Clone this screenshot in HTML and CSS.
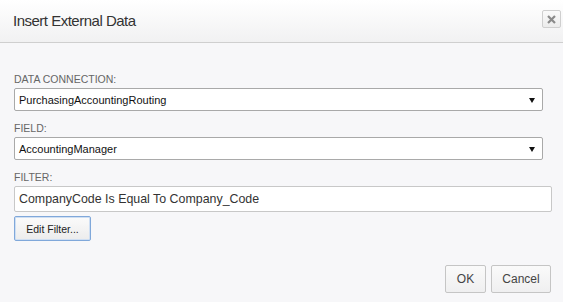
FILE: index.html
```html
<!DOCTYPE html>
<html>
<head>
<meta charset="utf-8">
<link rel="stylesheet" href="styles.css">
</head>
<body>
<div class="dialog">
  <div class="header">
    <div class="title">Insert External Data</div>
    <button class="close" aria-label="Close">
      <svg width="9" height="9" viewBox="0 0 9 9"><path d="M1 1L8 8M8 1L1 8" stroke="#8a8a8a" stroke-width="2.2"/></svg>
    </button>
  </div>
  <div class="body">
    <div class="field">
      <div class="label">DATA CONNECTION:</div>
      <div class="select"><span>PurchasingAccountingRouting</span><span class="arrow"></span></div>
    </div>
    <div class="field">
      <div class="label">FIELD:</div>
      <div class="select"><span>AccountingManager</span><span class="arrow"></span></div>
    </div>
    <div class="field filter">
      <div class="label">FILTER:</div>
      <div class="input">CompanyCode Is Equal To Company_Code</div>
      <button class="btn edit">Edit Filter...</button>
    </div>
    <div class="footer">
      <button class="btn ok">OK</button>
      <button class="btn cancel">Cancel</button>
    </div>
  </div>
</div>
</body>
</html>
```
FILE: styles.css
```css
html, body { margin: 0; padding: 0; }
body {
  width: 563px;
  height: 302px;
  background: #f7f7f9;
  font-family: "Liberation Sans", Arial, sans-serif;
  overflow: hidden;
}
.dialog { width: 563px; height: 302px; display: flex; flex-direction: column; }
.header {
  height: 43px;
  box-sizing: border-box;
  border-bottom: 1px solid #cfcfcf;
  background: linear-gradient(#ffffff, #f1f1f2);
  display: flex;
  align-items: center;
  justify-content: space-between;
  padding: 0 2px 0 13px;
}
.title {
  font-size: 15px; letter-spacing: -0.5px; color: #333; position: relative; top: -1px;
}
.close {
  width: 19px; height: 18px;
  margin-top: -4px;
  border: 1px solid #cfcfcf;
  border-radius: 2px;
  background: linear-gradient(#fafafa, #ececec);
  padding: 0;
  display: flex; align-items: center; justify-content: center;
}
.body { flex: 1; padding: 30px 0 0 14px; display: flex; flex-direction: column; }
.field { display: flex; flex-direction: column; }
.label { font-size: 10.5px; color: #666; line-height: 13px; height: 13px; margin-bottom: 2px; }
.select {
  width: 529px; height: 23px; box-sizing: border-box;
  border: 1px solid #a9a9a9;
  border-radius: 2px;
  background: #fff;
  display: flex; align-items: center; justify-content: space-between;
  padding: 0 7px 0 4px;
  font-size: 11px; color: #111;
  margin-bottom: 11px;
}
.arrow {
  width: 0; height: 0;
  border-left: 3px solid transparent;
  border-right: 3px solid transparent;
  border-top: 5px solid #111;
  margin-top: 1px;
}
.input {
  width: 538px; height: 26px; box-sizing: border-box;
  border: 1px solid #c8c8c8;
  border-radius: 2px;
  background: #fff;
  font-size: 12.4px; color: #333;
  padding: 0 4px;
  line-height: 24px;
  margin-bottom: 4px;
}
.btn {
  font-family: "Liberation Sans", Arial, sans-serif;
  font-size: 10.5px;
  color: #222;
  border: 1px solid #c5c5c5;
  border-radius: 2px;
  background: linear-gradient(#fbfbfb, #ececec);
  padding: 0;
  cursor: pointer;
}
.edit {
  width: 77px; height: 25px;
  border-color: #80a8da;
  box-shadow: inset 0 0 0 1px #cfdff3;
  color: #222;
}
.footer {
  margin-top: auto;
  margin-bottom: 9px;
  display: flex; justify-content: flex-end; gap: 5px;
  padding-right: 12px;
}
.ok, .cancel { height: 28px; font-size: 12px; color: #444; background: linear-gradient(#fafafa, #efeff0); }
.ok { width: 41px; }
.cancel { width: 60px; }
```
